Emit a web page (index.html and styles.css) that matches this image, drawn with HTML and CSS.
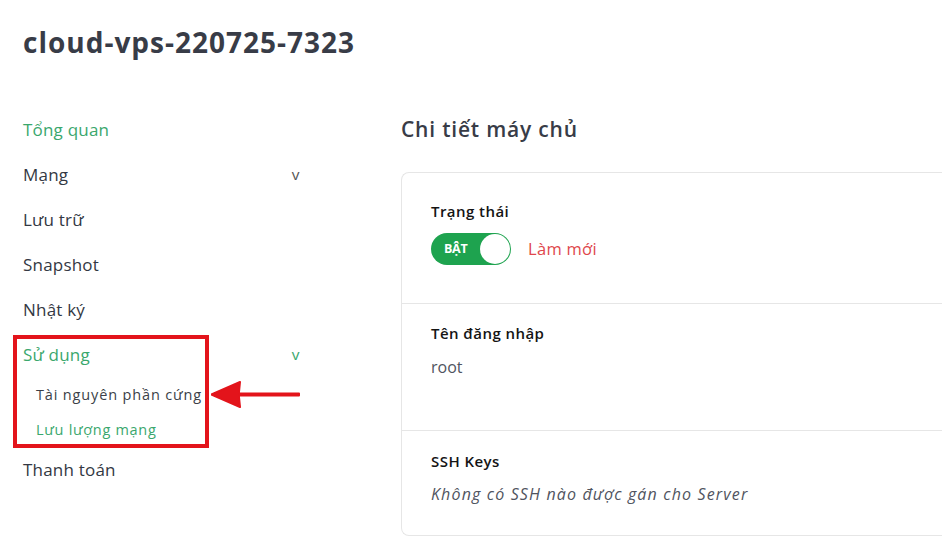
FILE: index.html
```html
<!DOCTYPE html>
<html lang="vi">
<head>
<meta charset="utf-8">
<link rel="stylesheet" href="styles.css">
</head>
<body>
<div class="page">
  <h1 class="title">cloud-vps-220725-7323</h1>
  <div class="layout">
    <nav class="sidebar">
      <div class="item active">Tổng quan</div>
      <div class="item"><span>Mạng</span><span class="chev">v</span></div>
      <div class="item">Lưu trữ</div>
      <div class="item">Snapshot</div>
      <div class="item">Nhật ký</div>
      <div class="group">
        <div class="item active"><span>Sử dụng</span><span class="chev green">v</span></div>
        <div class="sub">Tài nguyên phần cứng</div>
        <div class="sub active">Lưu lượng mạng</div>
        <div class="redbox"></div>
        <svg class="arrow" width="90" height="30" viewBox="0 0 90 30">
          <path d="M88 13.5 L28 13.5 L28 12 L29 2 L0 14.5 L29 27 L28 17 L28 15.5 L88 15.5 Z" fill="#e3141b" stroke="#e3141b" stroke-width="2" stroke-linejoin="round"/>
        </svg>
      </div>
      <div class="item">Thanh toán</div>
    </nav>
    <main class="main">
      <h2 class="subtitle">Chi tiết máy chủ</h2>
      <div class="card">
        <section class="sec sec1">
          <div class="label">Trạng thái</div>
          <div class="status">
            <div class="toggle"><span class="tlabel">BẬT</span><span class="knob"></span></div>
            <span class="refresh">Làm mới</span>
          </div>
        </section>
        <section class="sec sec2">
          <div class="label">Tên đăng nhập</div>
          <div class="value">root</div>
        </section>
        <section class="sec sec3">
          <div class="label">SSH Keys</div>
          <div class="value italic">Không có SSH nào được gán cho Server</div>
        </section>
      </div>
    </main>
  </div>
</div>
</body>
</html>
```
FILE: styles.css
```css
* { box-sizing: border-box; }
html, body { margin: 0; padding: 0; background: #fff; }
body {
  font-family: "Open Sans", "Noto Sans", sans-serif;
  color: #333843;
  width: 942px;
  height: 552px;
  overflow: hidden;
}
.page { padding: 24px 0 0 23px; }
.title {
  margin: 0;
  font-size: 28px;
  line-height: 36px;
  font-weight: 700;
  color: #383c47;
  letter-spacing: 1px;
}
.layout {
  display: flex;
  margin-top: 47px;
}
.sidebar {
  width: 276px;
  flex: none;
  display: flex;
  flex-direction: column;
}
.item {
  height: 45px;
  display: flex;
  align-items: center;
  justify-content: space-between;
  font-size: 17px;
  color: #333843;
  letter-spacing: 0.2px;
}
.item.active { color: #3aa76d; }
.chev {
  font-size: 14px;
  color: #555;
  transform: scaleX(1.1);
}
.chev.green { color: #3aa76d; }
.group { position: relative; }
.sub {
  height: 35px;
  display: flex;
  align-items: center;
  padding-left: 13px;
  font-size: 14.5px;
  color: #3b3f48;
  letter-spacing: 0.85px;
}
.sub.active { color: #3aa76d; letter-spacing: 0.7px; }
.redbox {
  position: absolute;
  left: -10px;
  top: 3px;
  width: 196px;
  height: 113px;
  border: 4px solid #e3141b;
}
.arrow {
  position: absolute;
  left: 188px;
  top: 48px;
}
.main {
  margin-left: 102px;
  flex: 1;
}
.subtitle {
  margin: 0;
  height: 45px;
  line-height: 45px;
  font-size: 21px;
  font-weight: 600;
  color: #383c47;
  letter-spacing: 0.8px;
}
.card {
  margin-top: 19.5px;
  border: 1px solid #e6e6e6;
  border-right: none;
  border-radius: 8px 0 0 8px;
  width: 560px;
}
.sec { padding-left: 29px; }
.sec + .sec { border-top: 1px solid #e6e6e6; }
.sec1 { height: 130px; padding-top: 27px; }
.sec2 { height: 127px; padding-top: 18px; }
.sec3 { height: 105px; padding-top: 19px; }
.label {
  font-size: 15px;
  font-weight: 600;
  color: #141414;
  line-height: 22px;
  letter-spacing: 0.45px;
}
.status {
  display: flex;
  align-items: center;
  margin-top: 11px;
}
.toggle {
  width: 80px;
  height: 32px;
  background: #1ea34f;
  border-radius: 16px;
  display: flex;
  align-items: center;
  justify-content: space-between;
  padding: 0 1px 0 13px;
}
.tlabel {
  color: #fff;
  font-size: 12.5px;
  font-weight: 700;
  letter-spacing: -0.3px;
}
.knob {
  width: 30px;
  height: 30px;
  border-radius: 50%;
  background: #fff;
}
.refresh {
  margin-left: 17px;
  font-size: 16.5px;
  color: #e0474c;
  letter-spacing: 0.3px;
}
.value {
  margin-top: 12px;
  font-size: 16px;
  color: #505460;
  line-height: 22px;
}
.italic { font-style: italic; margin-top: 11px; letter-spacing: 1.15px; }
```
